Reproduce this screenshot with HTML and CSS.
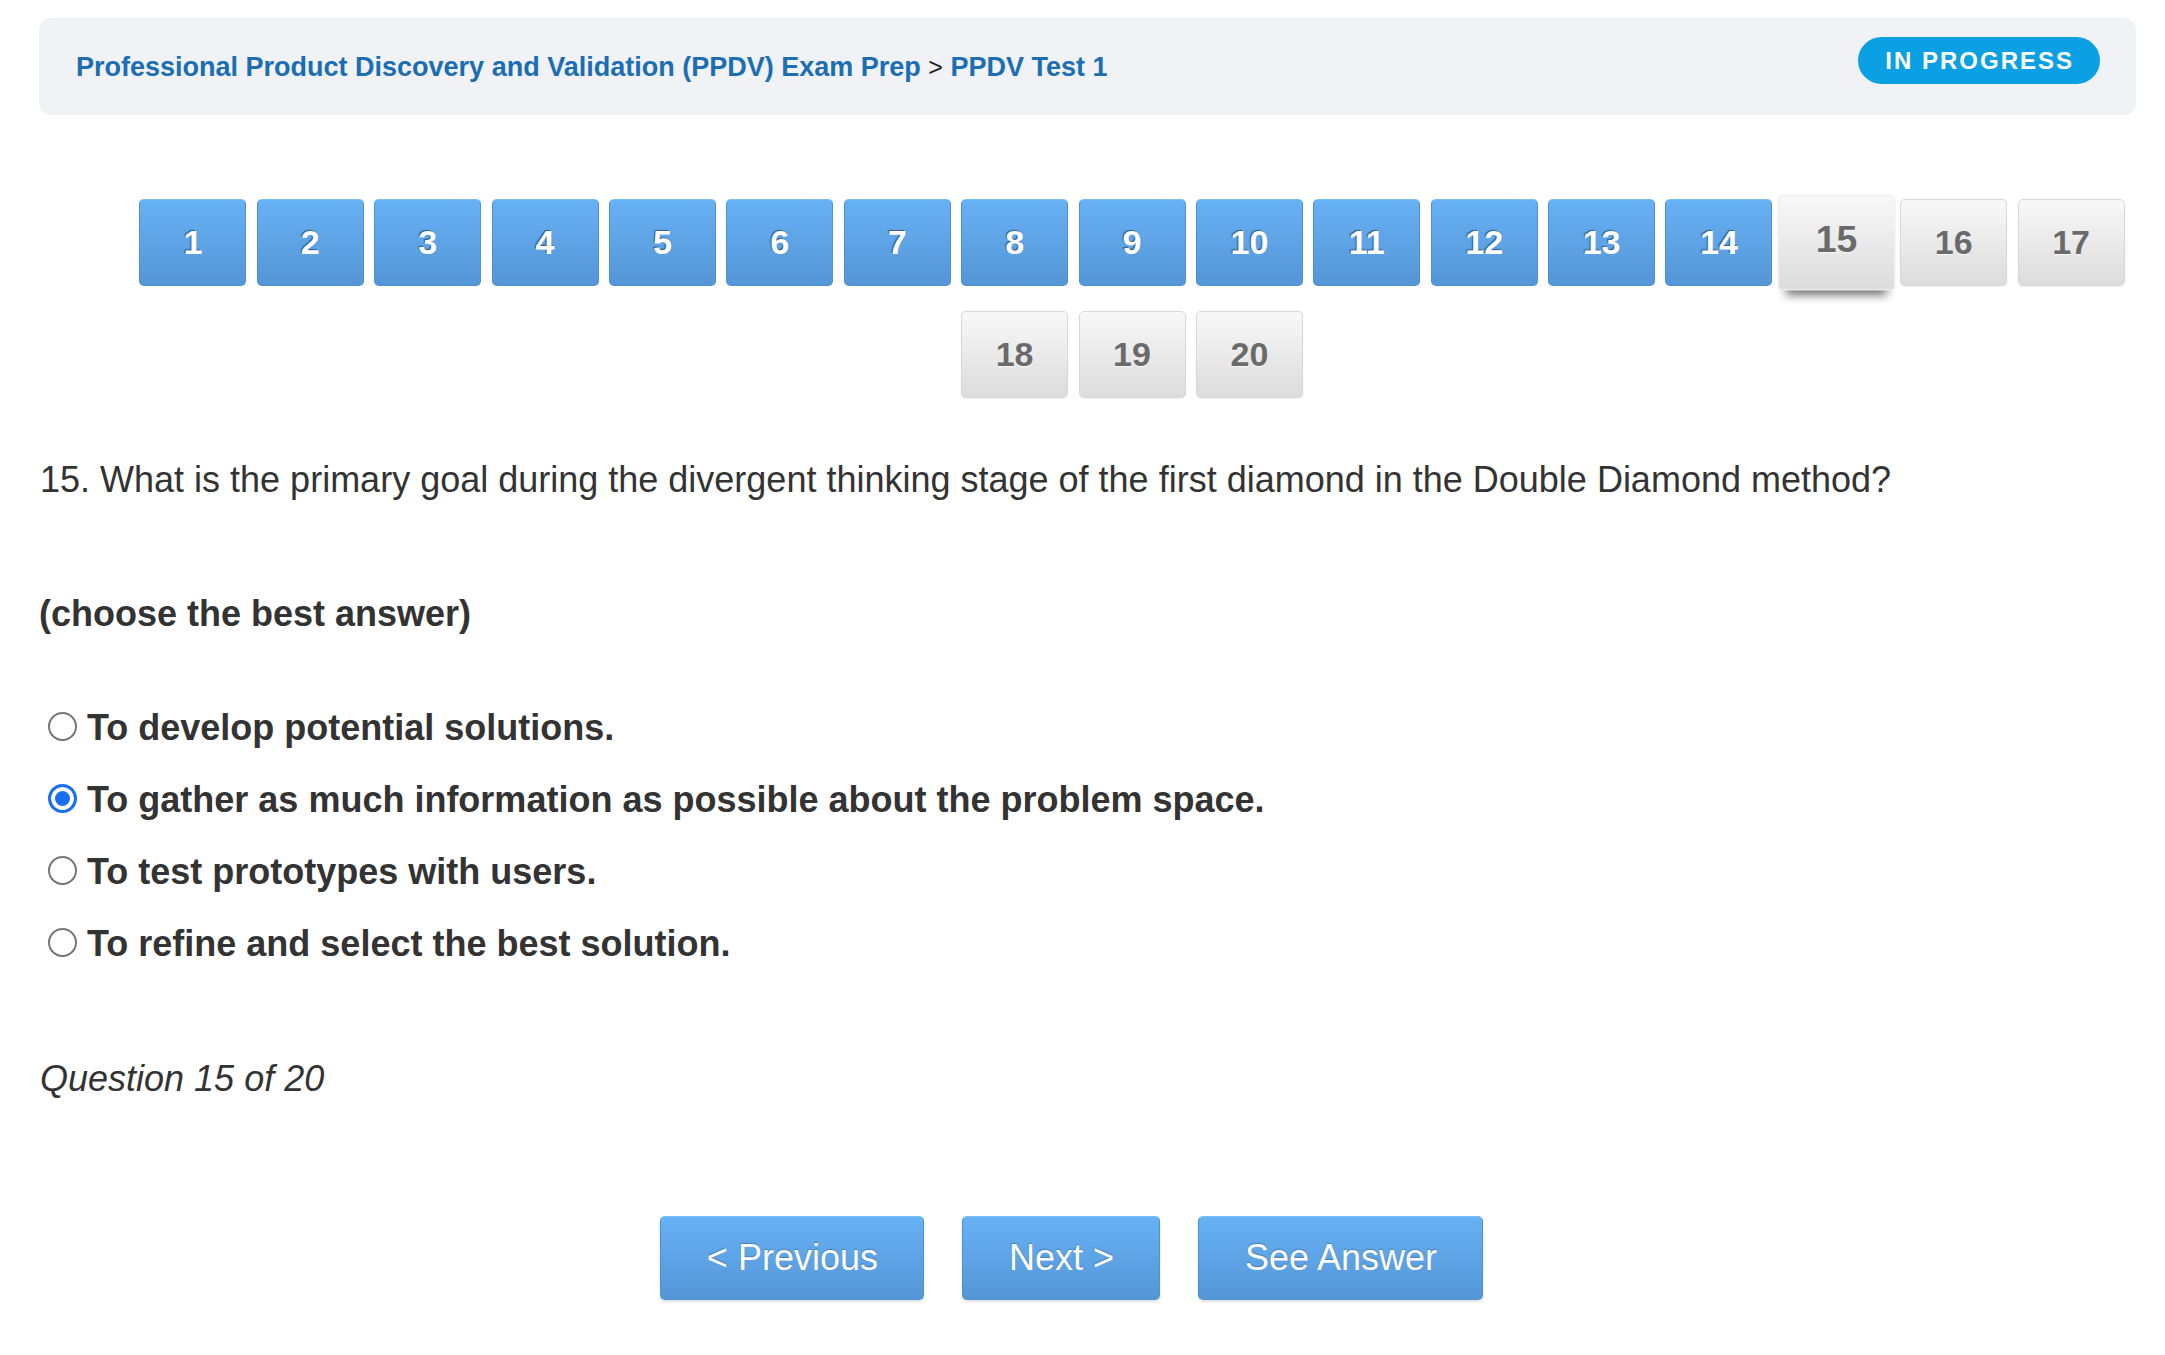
FILE: index.html
```html
<!DOCTYPE html>
<html lang="en">
<head>
<meta charset="utf-8">
<title>PPDV Test 1</title>
<link rel="stylesheet" href="styles.css">
</head>
<body>
<div class="page">
  <header class="topbar">
    <nav class="crumbs">
      <a class="crumb" href="#">Professional Product Discovery and Validation (PPDV) Exam Prep</a>
      <span class="sep">&gt;</span>
      <a class="crumb" href="#">PPDV Test 1</a>
    </nav>
    <span class="badge">IN PROGRESS</span>
  </header>

  <div class="pager">
    <a class="pg done" href="#">1</a>
    <a class="pg done" href="#">2</a>
    <a class="pg done" href="#">3</a>
    <a class="pg done" href="#">4</a>
    <a class="pg done" href="#">5</a>
    <a class="pg done" href="#">6</a>
    <a class="pg done" href="#">7</a>
    <a class="pg done" href="#">8</a>
    <a class="pg done" href="#">9</a>
    <a class="pg done" href="#">10</a>
    <a class="pg done" href="#">11</a>
    <a class="pg done" href="#">12</a>
    <a class="pg done" href="#">13</a>
    <a class="pg done" href="#">14</a>
    <a class="pg todo current" href="#">15</a>
    <a class="pg todo" href="#">16</a>
    <a class="pg todo" href="#">17</a>
    <a class="pg todo" href="#">18</a>
    <a class="pg todo" href="#">19</a>
    <a class="pg todo" href="#">20</a>
  </div>

  <p class="question">15. What is the primary goal during the divergent thinking stage of the first diamond in the Double Diamond method?</p>

  <p class="hint">(choose the best answer)</p>

  <form class="options">
    <label class="opt"><input class="radio" type="radio" name="a"><span>To develop potential solutions.</span></label>
    <label class="opt"><input class="radio" type="radio" name="a" checked><span>To gather as much information as possible about the problem space.</span></label>
    <label class="opt"><input class="radio" type="radio" name="a"><span>To test prototypes with users.</span></label>
    <label class="opt"><input class="radio" type="radio" name="a"><span>To refine and select the best solution.</span></label>
  </form>

  <p class="counter">Question 15 of 20</p>

  <div class="actions">
    <button class="btn" type="button">&lt; Previous</button>
    <button class="btn" type="button">Next &gt;</button>
    <button class="btn" type="button">See Answer</button>
  </div>
</div>
</body>
</html>
```

FILE: styles.css
```css
html, body {
  margin: 0;
  padding: 0;
  background: #ffffff;
}

body {
  font-family: "Liberation Sans", Arial, Helvetica, sans-serif;
  color: #333333;
}

.page {
  padding: 18px 29px 40px 39px;
}

/* ---------- header ---------- */
.topbar {
  height: 97px;
  box-sizing: border-box;
  background: #f0f2f5;
  border-radius: 12px;
  padding: 0 36px 0 37px;
  display: flex;
  justify-content: space-between;
  align-items: flex-start;
}

.crumbs {
  align-self: center;
  font-size: 27px;
  line-height: 32px;
  white-space: nowrap;
}

.crumb {
  color: #1b6db4;
  font-weight: bold;
  text-decoration: none;
}

.sep {
  color: #222;
  font-size: 25px;
}

.badge {
  margin-top: 19px;
  height: 47px;
  box-sizing: border-box;
  padding: 0 26px 0 27px;
  border-radius: 24px;
  background: #0ba0e4;
  color: #ffffff;
  font-weight: bold;
  font-size: 24px;
  letter-spacing: 2px;
  line-height: 47px;
  white-space: nowrap;
}

/* ---------- pager ---------- */
.pager {
  margin-top: 84px;
  padding-left: 89px;
  display: flex;
  flex-wrap: wrap;
  justify-content: center;
  gap: 25px 10.4px;
}

.pg {
  width: 107px;
  height: 87px;
  box-sizing: border-box;
  border-radius: 5px;
  display: flex;
  align-items: center;
  justify-content: center;
  font-size: 34px;
  font-weight: bold;
  text-decoration: none;
}

.done {
  background: linear-gradient(#67b1f5, #5496d6);
  border: 1px solid #4e91d2;
  border-top-color: #7cbdf7;
  color: #ffffff;
  text-shadow: -1px -1px 1px rgba(0, 0, 0, 0.45);
}

.todo {
  background: linear-gradient(#f8f8f8, #dcdcdc);
  border: 1px solid #d8d8d8;
  color: #6a6a6a;
  text-shadow: 0 1px 0 rgba(255, 255, 255, 0.8);
  box-shadow: 0 1px 2px rgba(0, 0, 0, 0.06);
}

.current {
  transform: scale(1.1);
  padding-bottom: 6px;
  border-color: #ececec;
  box-shadow: 0 13px 8px -8px rgba(0, 0, 0, 0.55);
  position: relative;
  z-index: 1;
}

/* ---------- question ---------- */
.question {
  margin: 61px 0 0 1px;
  font-size: 36px;
  line-height: 42px;
  color: #333333;
}

.hint {
  margin: 92px 0 0 0;
  font-size: 36px;
  line-height: 42px;
  font-weight: bold;
  color: #333333;
}

.options {
  margin: 57px 0 0 0;
}

.opt {
  display: flex;
  align-items: center;
  height: 72px;
  font-size: 36px;
  font-weight: bold;
  color: #333333;
}

.radio {
  appearance: none;
  -webkit-appearance: none;
  width: 29px;
  height: 29px;
  margin: 0 10px 0 9px;
  box-sizing: border-box;
  border: 2px solid #767676;
  border-radius: 50%;
  background: #ffffff;
  position: relative;
  top: -2px;
}

.radio:checked {
  border: 3px solid #1a6ff0;
  background: #1a6ff0;
  box-shadow: inset 0 0 0 4px #ffffff;
}

.counter {
  margin: 78px 0 0 1px;
  font-size: 36px;
  line-height: 42px;
  font-style: italic;
  color: #333333;
}

/* ---------- actions ---------- */
.actions {
  margin-top: 116px;
  padding-left: 6px;
  display: flex;
  justify-content: center;
}

.btn {
  height: 84px;
  padding: 0 45px 0 46px;
  margin-right: 38px;
  border-radius: 5px;
  border: 1px solid #4f92d3;
  border-top-color: #7cbdf7;
  background: linear-gradient(#67b1f5, #5496d6);
  color: #ffffff;
  font-family: "Liberation Sans", Arial, Helvetica, sans-serif;
  font-size: 36px;
  box-shadow: 0 2px 3px rgba(0, 0, 0, 0.12);
  text-shadow: 0 -1px 1px rgba(0, 0, 0, 0.25);
  cursor: pointer;
}
```
